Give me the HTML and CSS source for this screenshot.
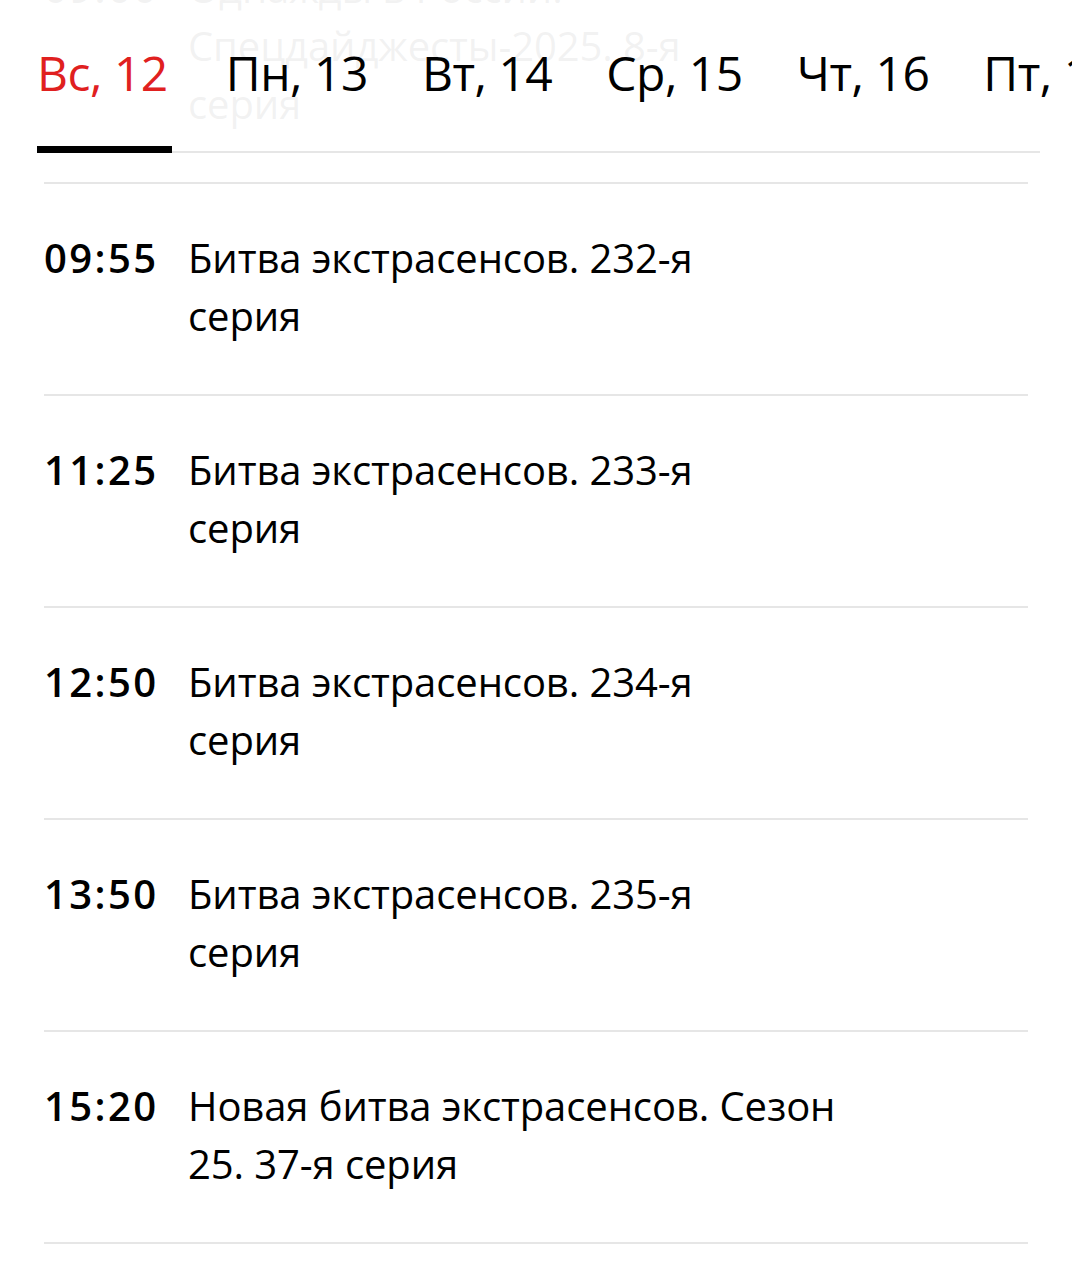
FILE: index.html
```html
<!DOCTYPE html>
<html lang="ru">
<head>
<meta charset="utf-8">
<title>Программа передач</title>
<link rel="stylesheet" href="styles.css">
</head>
<body>
<div class="page">
  <header class="days">
    <nav class="tabs">
      <a class="tab active">Вс, 12</a>
      <a class="tab">Пн, 13</a>
      <a class="tab">Вт, 14</a>
      <a class="tab">Ср, 15</a>
      <a class="tab">Чт, 16</a>
      <a class="tab">Пт, 17</a>
      <a class="tab">Сб, 18</a>
    </nav>
  </header>
  <ul class="schedule">
    <li class="item">
      <span class="time">09:00</span>
      <span class="title">Однажды в России.<br>Спецдайджесты-2025. 8-я<br>серия</span>
    </li>
    <li class="item">
      <span class="time">09:55</span>
      <span class="title">Битва экстрасенсов. 232-я<br>серия</span>
    </li>
    <li class="item">
      <span class="time">11:25</span>
      <span class="title">Битва экстрасенсов. 233-я<br>серия</span>
    </li>
    <li class="item">
      <span class="time">12:50</span>
      <span class="title">Битва экстрасенсов. 234-я<br>серия</span>
    </li>
    <li class="item">
      <span class="time">13:50</span>
      <span class="title">Битва экстрасенсов. 235-я<br>серия</span>
    </li>
    <li class="item">
      <span class="time">15:20</span>
      <span class="title">Новая битва экстрасенсов. Сезон<br>25. 37-я серия</span>
    </li>
  </ul>
</div>
</body>
</html>
```
FILE: styles.css
```css
html, body {
  margin: 0;
  padding: 0;
  background: #ffffff;
  overflow-x: hidden;
}

body {
  font-family: "Open Sans", "Noto Sans", sans-serif;
  color: #000000;
}

.page {
  position: relative;
  width: 1072px;
  overflow: hidden;
}

.days {
  position: absolute;
  top: 0;
  left: 0;
  right: 0;
  z-index: 2;
  padding-top: 43px;
  background: rgba(255, 255, 255, 0.95);
  overflow: hidden;
}

.tabs {
  display: flex;
  gap: 54px;
  margin: 0 32px 0 37px;
  border-bottom: 2px solid #e6e6e6;
  white-space: nowrap;
}

.tab {
  flex-shrink: 0;
  font-size: 48px;
  line-height: 60px;
  letter-spacing: -0.5px;
  padding-bottom: 43px;
  border-bottom: 7px solid transparent;
  margin-bottom: -2px;
  color: #000000;
}

.tab.active {
  color: #e0201f;
  border-bottom-color: #000000;
  padding-right: 4px;
}

.schedule {
  list-style: none;
  margin: -86px 44px 0 44px;
  padding: 0;
}

.item {
  display: grid;
  grid-template-columns: 144px 1fr;
  padding: 45px 0 49px 0;
  border-bottom: 2px solid #e6e6e6;
  font-size: 40px;
  line-height: 58px;
}

.time {
  font-weight: 600;
  letter-spacing: 2.4px;
}

.title {
  font-weight: 400;
  letter-spacing: -0.1px;
}
```
